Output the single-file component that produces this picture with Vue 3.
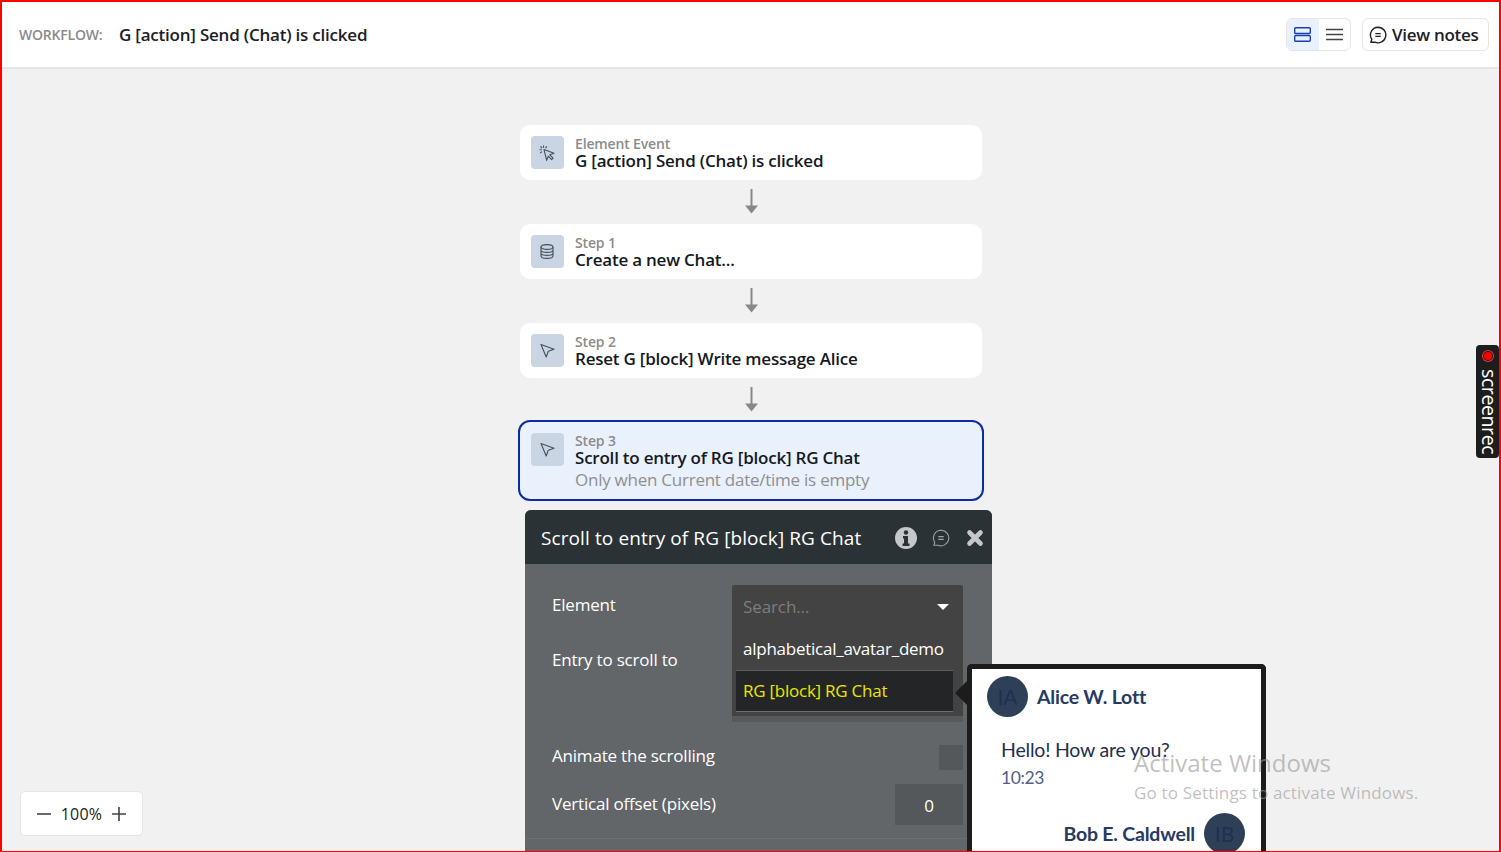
<script setup>
const steps = [
  { label: 'Element Event', title: 'G [action] Send (Chat) is clicked', icon: 'click' },
  { label: 'Step 1', title: 'Create a new Chat...', icon: 'db' },
  { label: 'Step 2', title: 'Reset G [block] Write message Alice', icon: 'arrow' },
]
</script>

<template>
  <div class="page">
    <header class="top">
      <span class="wf-label">WORKFLOW:</span>
      <span class="wf-name">G [action] Send (Chat) is clicked</span>
      <div class="top-right">
        <div class="toggle">
          <span class="tg active">
            <svg width="17" height="15" viewBox="0 0 17 15" fill="none" stroke="#1a3fb0" stroke-width="1.4"><rect x="0.7" y="0.7" width="15.6" height="5.8" rx="1"/><rect x="0.7" y="8.500" width="15.6" height="5.800" rx="1"/></svg>
          </span>
          <span class="tg">
            <svg width="17" height="13" viewBox="0 0 17 13" fill="none" stroke="#444" stroke-width="1.6"><path d="M0 1.500h17M0 6.500h17M0 11.500h17"/></svg>
          </span>
        </div>
        <button class="notes">
          <svg width="18" height="18" viewBox="0 0 18 18" fill="none" stroke="#222" stroke-width="1.4"><path d="M9 1.200a7.800 7.800 0 1 1-3 15H1.800l1-2.800A7.800 7.800 0 0 1 9 1.200z" stroke-linejoin="round"/><path d="M6.300 7.600h5.400M6.300 10.400h5.400"/></svg>
          <span>View notes</span>
        </button>
      </div>
    </header>

    <main class="canvas">
      <div class="flow">
        <template v-for="s in steps" :key="s.label">
          <div class="card">
            <span class="ico">
              <svg v-if="s.icon === 'click'" width="16" height="16" viewBox="0 0 16 16" fill="none" stroke="#47505c" stroke-width="1.100"><path d="M5 4.500l10 3.800-4.200 1.500 3.300 3.400-1.500 1.400-3.300-3.400-1.600 4.200z" stroke-linejoin="round"/><path d="M4.500 0.500v2.300M0.500 4.800h2.300M1.500 1.500l1.600 1.600M1.200 8l1.700-1.400M7.800 1.500L6.400 3"/></svg>
              <svg v-else-if="s.icon === 'db'" width="14" height="15" viewBox="0 0 14 15" fill="none" stroke="#47505c" stroke-width="1.100"><ellipse cx="7" cy="3" rx="6" ry="2.400"/><path d="M1 3v9c0 1.300 2.700 2.400 6 2.400s6-1.100 6-2.400V3M1 6c0 1.300 2.700 2.400 6 2.400S13 7.300 13 6M1 9c0 1.300 2.700 2.400 6 2.400S13 10.300 13 9"/></svg>
              <svg v-else width="15" height="15" viewBox="0 0 15 15" fill="none" stroke="#47505c" stroke-width="1.100"><path d="M1 1.500l13 4.800-5.700 2-2.100 5.700z" stroke-linejoin="round"/></svg>
            </span>
            <div class="txt">
              <div class="lbl">{{ s.label }}</div>
              <div class="ttl">{{ s.title }}</div>
            </div>
          </div>
          <svg class="arr" width="13" height="25" viewBox="0 0 13 25"><path d="M6.500 0v18" stroke="#888" stroke-width="2"/><path d="M0 16.500h13l-6.500 8z" fill="#888"/></svg>
        </template>
        <div class="card selected">
          <span class="ico">
            <svg width="15" height="15" viewBox="0 0 15 15" fill="none" stroke="#47505c" stroke-width="1.100"><path d="M1 1.500l13 4.800-5.700 2-2.100 5.700z" stroke-linejoin="round"/></svg>
          </span>
          <div class="txt">
            <div class="lbl">Step 3</div>
            <div class="ttl">Scroll to entry of RG [block] RG Chat</div>
            <div class="cond">Only when Current date/time is empty</div>
          </div>
        </div>
      </div>

      <div class="zoom">
        <svg width="16" height="16" viewBox="0 0 16 16" stroke="#444" stroke-width="1.600"><path d="M1 8h14"/></svg>
        <span>100%</span>
        <svg width="16" height="16" viewBox="0 0 16 16" stroke="#444" stroke-width="1.600"><path d="M1 8h14M8 1v14"/></svg>
      </div>
    </main>

    <section class="panel">
      <div class="p-head">
        <span class="p-title">Scroll to entry of RG [block] RG Chat</span>
        <svg class="p-i" width="22" height="22" viewBox="0 0 22 22"><circle cx="11" cy="11" r="11" fill="#c4c8ca"/><circle cx="11" cy="5.500" r="2.200" fill="#2b3235"/><path d="M8 9h5v7.500h1.500V19h-7v-2.500H9V11.500H8z" fill="#2b3235"/></svg>
        <svg class="p-c" width="18" height="18" viewBox="0 0 18 18" fill="none" stroke="#9ba1a4" stroke-width="1.100"><path d="M9 1.200a7.800 7.800 0 1 1-3 15H1.800l1-2.800A7.800 7.800 0 0 1 9 1.200z" stroke-linejoin="round"/><path d="M6.300 7.600h5.400M6.300 10.400h5.400"/></svg>
        <svg class="p-x" width="18" height="18" viewBox="0 0 18 18" stroke="#c4c8ca" stroke-width="4.600" stroke-linecap="round"><path d="M3.500 3.500l11 11M14.500 3.500l-11 11"/></svg>
      </div>
      <div class="p-body">
        <div class="row row-el">
          <div class="labels">
            <div class="l1">Element</div>
            <div class="l2">Entry to scroll to</div>
          </div>
          <div class="drop">
            <div class="search"><span>Search...</span><i class="caret"></i></div>
            <div class="opt">alphabetical_avatar_demo</div>
            <div class="opt hi">RG [block] RG Chat</div>
            <div class="drop-foot"></div>
          </div>
        </div>
        <div class="row row-an">
          <span>Animate the scrolling</span>
          <span class="check"></span>
        </div>
        <div class="row row-off">
          <span>Vertical offset (pixels)</span>
          <span class="num">0</span>
        </div>
        <div class="divider"></div>
      </div>
    </section>

    <aside class="chat">
      <i class="tip"></i>
      <div class="msg-head">
        <span class="av">IA</span>
        <b>Alice W. Lott</b>
      </div>
      <div class="msg">Hello! How are you?</div>
      <div class="time">10:23</div>
      <div class="msg-head right">
        <b>Bob E. Caldwell</b>
        <span class="av">IB</span>
      </div>
    </aside>

    <div class="activate">
      <div class="a1">Activate Windows</div>
      <div class="a2">Go to Settings to activate Windows.</div>
    </div>

    <div class="rec">
      <span class="dot"></span>
      <span class="rec-t">screenrec</span>
    </div>
  </div>
</template>

<style>
html, body { margin: 0; padding: 0; overflow: hidden; }
</style>

<style scoped>
.page {
  position: relative;
  width: 1501px;
  height: 852px;
  box-sizing: border-box;
  border: 2px solid #f00;
  border-bottom-width: 1px;
  overflow: hidden;
  background: #f1f1f1;
  font-family: "Open Sans", sans-serif;
  display: flex;
  flex-direction: column;
}
.top {
  height: 67px;
  box-sizing: border-box;
  background: #fff;
  border-bottom: 2px solid #e5e5e5;
  display: flex;
  align-items: center;
  padding: 0 10px 0 17px;
  flex: none;
}
.wf-label { font-size: 14px; font-weight: 600; color: #8a8a8a; letter-spacing: -0.2px; width: 100px; }
.wf-name { font-size: 17px; font-weight: 600; color: #1c2026; letter-spacing: -0.22px; }
.top-right { margin-left: auto; display: flex; gap: 11px; align-items: center; }
.toggle { display: flex; width: 65px; height: 33px; box-sizing: border-box; border: 1px solid #e5e5e5; border-radius: 6px; overflow: hidden; }
.tg { flex: 1; display: flex; align-items: center; justify-content: center; }
.tg.active { background: #e9f1fc; }
.notes {
  display: flex; align-items: center; gap: 5px;
  height: 33px; width: 127px; box-sizing: border-box; padding: 0 0 0 6px;
  background: #fff; border: 1px solid #e5e5e5; border-radius: 6px;
  font: 600 17px "Open Sans", sans-serif; color: #1c2026; letter-spacing: -0.3px;
}
.canvas { flex: 1; position: relative; min-height: 0; }
.flow {
  display: flex; flex-direction: column; align-items: center;
  padding-top: 56px;
}
.card {
  width: 462px; height: 55px; box-sizing: border-box;
  background: #fff; border-radius: 10px;
  display: flex; padding: 11px;
  gap: 11px;
}
.card.selected {
  width: 466px; height: 81px;
  background: #e9f1fc; border: 2px solid #0d2ba5;
  padding: 11px 11px 0;
  border-radius: 12px;
  margin-top: -2px;
}
.ico {
  width: 33px; height: 33px; flex: none;
  background: #c9d5e2; border-radius: 4px;
  display: flex; align-items: center; justify-content: center;
}
.txt { padding-left: 0.5px; }
.lbl { font-size: 14px; font-weight: 600; color: #8c8c8c; line-height: 16px; letter-spacing: -0.15px; }
.ttl { font-size: 17px; font-weight: 600; color: #15191f; line-height: 18px; letter-spacing: -0.22px; }
.cond { font-size: 17px; color: #8f8f8f; line-height: 22px; margin-top: 2px; letter-spacing: -0.25px; }
.arr { margin: 9px 0 10px 1px; flex: none; }

.zoom {
  position: absolute; left: 18px; bottom: 15px;
  width: 123px; height: 45px; box-sizing: border-box;
  background: #fff; border: 1px solid #e5e5e5; border-radius: 5px;
  display: flex; align-items: center; justify-content: center; gap: 9px;
  font-size: 16px; color: #222; letter-spacing: 0.2px;
}

.panel {
  position: absolute; left: 523px; top: 508px;
  width: 467px; height: 345px;
  background: #626669; border-radius: 6px 6px 0 0;
  color: #fff;
}
.p-head {
  height: 54px; box-sizing: border-box; padding: 2px 8px 0 16px; background: #2b3235; border-radius: 6px 6px 0 0;
  display: flex; align-items: center;
}
.p-title { font-size: 19px; color: #fff; letter-spacing: 0.1px; flex: 1; }
.p-c { margin: 0 16px 0 15px; }
.p-body { padding: 21px 29px 0 27px; font-size: 17px; letter-spacing: -0.2px; }
.row { display: flex; justify-content: space-between; }
.labels { width: 180px; }
.l1 { line-height: 24px; margin-top: 8px; }
.l2 { line-height: 24px; margin-top: 31px; }
.drop { width: 231px; height: 137px; background: #434343; border-radius: 2px; position: relative; }
.search {
  height: 43px; padding: 0 14px 0 11px; display: flex; align-items: center; justify-content: space-between;
  color: #7d7d7d; letter-spacing: -0.1px;
}
.caret { width: 0; height: 0; border-left: 6px solid transparent; border-right: 6px solid transparent; border-top: 6px solid #fff; }
.opt { height: 42px; line-height: 42px; padding-left: 11px; letter-spacing: -0.25px; }
.opt.hi {
  margin: 0 10px 0 4px; padding-left: 7px;
  background: #242527; color: #e8e800;
  border-top: 1px solid #5c5f61; border-bottom: 1px solid #6d6f70;
  line-height: 40px; box-sizing: border-box;
}
.drop-foot { position: absolute; left: 0; right: 0; bottom: 0; height: 6px; background: #57595b; }
.row-an { margin-top: 23px; align-items: center; height: 25px; }
.row-an > span:first-child { padding-bottom: 4px; }
.check { width: 24px; height: 25px; background: #54585a; }
.row-off { margin-top: 14px; height: 41px; }
.row-off > span:first-child { line-height: 40px; }
.num {
  width: 68px; height: 41px; background: #54585a;
  display: flex; align-items: center; justify-content: center; font-size: 17px; padding-top: 2px; box-sizing: border-box;
}
.divider { height: 1px; background: #6c7073; margin: 13px -29px 0 -27px; }

.chat {
  position: absolute; left: 965px; top: 662px;
  width: 299px; height: 190px; box-sizing: border-box;
  background: #fff; border: 5px solid #1c1c1c; border-bottom: 0; border-radius: 5px 5px 0 0;
  font-family: Lato, sans-serif; color: #26335a;
  padding: 7px 16px 0 15px;
}
.tip {
  position: absolute; left: -17px; top: 12px;
  border: 12px solid transparent; border-left: 0; border-right-color: #1c1c1c;
  border-right-width: 12px;
}
.msg-head { display: flex; align-items: center; gap: 9px; font-size: 19.5px; }
.msg-head b { font-weight: 700; letter-spacing: -0.2px; color: #273a63; }
.msg-head.right { justify-content: flex-end; margin-top: 21px; }
.av {
  width: 41px; height: 41px; border-radius: 50%; background: #2e4057;
  color: #1e2f52; font-size: 21px; display: flex; align-items: center; justify-content: center; flex: none;
}
.msg { font-size: 19.5px; margin: 20px 0 0 14px; line-height: 26px; letter-spacing: -0.2px; color: #232f4e; }
.time { font-size: 17.5px; margin: 1px 0 0 14px; line-height: 28px; color: #50608a; letter-spacing: -0.4px; }

.activate {
  position: absolute; left: 1132px; top: 744px;
  color: rgba(150,150,150,0.6); pointer-events: none;
}
.a1 { font-size: 24px; line-height: 34px; }
.a2 { font-size: 17px; line-height: 24px; margin-top: 1px; letter-spacing: 0.17px; }

.rec {
  position: absolute; right: 0; top: 343px;
  width: 23px; height: 113px;
  background: #1d1d1d; border-radius: 4px;
  display: flex; flex-direction: column; align-items: center;
}
.dot {
  width: 8px; height: 8px; background: #f00; border-radius: 50%;
  margin-top: 7px; box-shadow: 0 0 0 1px #1d1d1d, 0 0 0 2px #e33; flex: none;
}
.rec-t {
  writing-mode: vertical-rl; color: #fff; font-size: 19.500px; letter-spacing: -0.4px;
  margin: 9px 0 0 3px; line-height: 23px;
}
</style>
